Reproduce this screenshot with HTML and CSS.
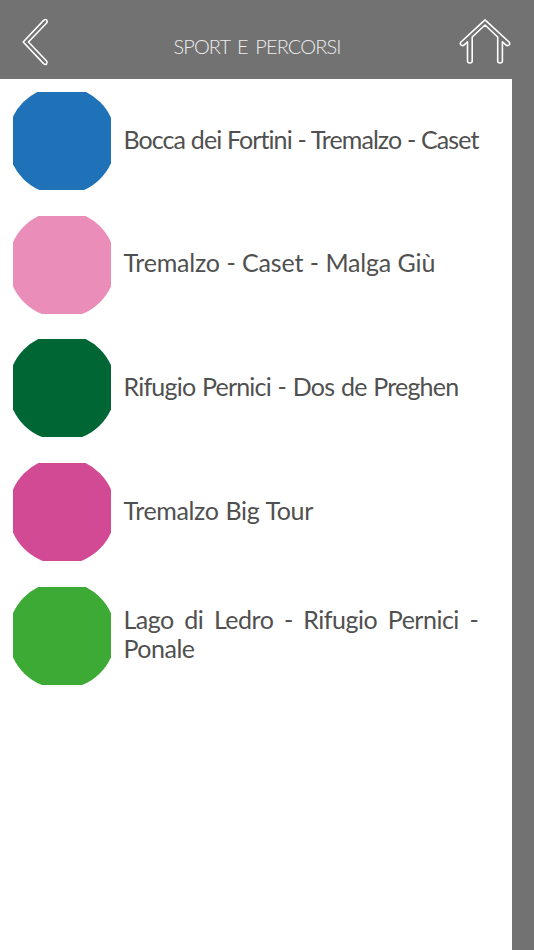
FILE: index.html
```html
<!DOCTYPE html>
<html lang="it">
<head>
<meta charset="utf-8">
<title>Sport e percorsi</title>
<link rel="stylesheet" href="styles.css">
</head>
<body>
<header class="bar">
  <svg class="back" viewBox="0 0 28 50" width="28" height="50"><path d="M2.2 25 L22.6 3.4 Q24.4 1.8 25.6 3.1 Q26.8 4.6 25.4 6.2 L7.4 25 L25.4 43.8 Q26.8 45.4 25.6 46.9 Q24.4 48.2 22.6 46.6 Z"/></svg>
  <h1 class="title">SPORT E PERCORSI</h1>
  <svg class="home" viewBox="0 0 52 48" width="52" height="48"><path d="M26 2.8 L50 25 Q51.4 26.8 50 28 Q48.5 29.3 46.5 27.6 L43.4 24.8 V44 Q43.4 46 41 46 Q38.7 46 38.7 44 V20 L26 8 L13.2 20 V44 Q13.2 46 10.8 46 Q8.5 46 8.5 44 V24.8 L5.5 27.6 Q3.5 29.3 2 28 Q.6 26.8 2 25 Z"/></svg>
</header>
<main class="list">
  <a class="row"><svg class="dot blue" viewBox="0 0 98 98"><circle cx="48.7" cy="48.5" r="54.3"/></svg><span class="name n1">Bocca dei Fortini - Tremalzo - Caset</span></a>
  <a class="row"><svg class="dot pink" viewBox="0 0 98 98"><circle cx="49" cy="48.2" r="53.7"/></svg><span class="name n2">Tremalzo - Caset - Malga Giù</span></a>
  <a class="row"><svg class="dot dark" viewBox="0 0 98 98"><circle cx="49" cy="48.2" r="53.7"/></svg><span class="name n3">Rifugio Pernici - Dos de Preghen</span></a>
  <a class="row"><svg class="dot magenta" viewBox="0 0 98 98"><circle cx="49" cy="48" r="53.5"/></svg><span class="name n4">Tremalzo Big Tour</span></a>
  <a class="row"><svg class="dot green" viewBox="0 0 98 98"><circle cx="49" cy="48.2" r="53.7"/></svg><span class="name n5">Lago di Ledro - Rifugio Pernici -<br>Ponale</span></a>
</main>
</body>
</html>
```
FILE: styles.css
```css
* { box-sizing: border-box; }
body { margin: 0; height: 950px; background: #727272; font-family: Lato, "Liberation Sans", sans-serif; overflow: hidden; }
.bar { height: 79px; display: flex; justify-content: space-between; align-items: flex-start; padding: 17px 23px 0 21px; }
.bar svg { fill: none; stroke: #fff; stroke-width: 1.6; stroke-linejoin: round; }
.title { margin: 15px 0 0 6px; font-size: 20px; line-height: 28px; font-weight: 300; color: #ededed; white-space: nowrap; letter-spacing: -.9px; word-spacing: 3px; }
.list { width: 512px; height: 871px; background: #fff; padding: 13px 0 0 13px; display: flex; flex-direction: column; gap: 25.7px; }
.row { display: flex; align-items: center; gap: 12.5px; height: 98px; flex: none; }
.dot { width: 98px; height: 98px; flex: none; overflow: hidden; }
.blue { fill: #1f71b8; }
.pink { fill: #ea8eb9; }
.dark { fill: #006633; }
.magenta { fill: #d14a93; }
.green { fill: #3daa35; }
.name { padding-bottom: 4px; font-size: 25px; line-height: 28.5px; color: #505050; white-space: nowrap; font-variant-ligatures: none; }
.n1 { letter-spacing: -.92px; word-spacing: .2px; }
.n2 { letter-spacing: -.2px; word-spacing: .4px; }
.n3 { letter-spacing: -.8px; word-spacing: 1.1px; }
.n4 { letter-spacing: -.35px; word-spacing: .8px; }
.n5 { letter-spacing: -.5px; word-spacing: 4.7px; }
```
